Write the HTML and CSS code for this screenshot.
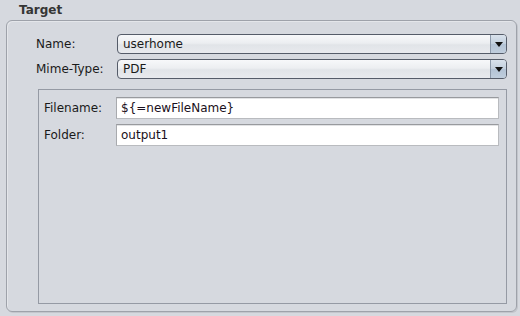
FILE: index.html
```html
<!DOCTYPE html>
<html>
<head>
<meta charset="utf-8">
<link rel="stylesheet" href="styles.css">
</head>
<body>
<div class="title">Target</div>
<div class="panel">
  <div class="rows">
    <label class="lbl">Name:</label>
    <div class="combo"><span class="combo-text">userhome</span><span class="combo-btn"><span class="arrow"></span></span></div>
    <label class="lbl">Mime-Type:</label>
    <div class="combo"><span class="combo-text">PDF</span><span class="combo-btn"><span class="arrow"></span></span></div>
  </div>
  <div class="inner">
    <div class="fields">
      <label class="lbl">Filename:</label>
      <div class="field">${=newFileName}</div>
      <label class="lbl">Folder:</label>
      <div class="field">output1</div>
    </div>
  </div>
</div>
</body>
</html>
```

FILE: styles.css
```css
html, body {
  margin: 0;
  padding: 0;
  width: 520px;
  height: 316px;
  overflow: hidden;
  background: #d6d9df;
  font-family: "DejaVu Sans", sans-serif;
  font-size: 12px;
  color: #1a1a1a;
}
.title {
  font-weight: bold;
  color: #353535;
  padding-left: 19px;
  height: 20px;
  line-height: 20px;
  box-sizing: border-box;
  padding-top: 0;
}
.panel {
  margin-left: 6px;
  width: 511px;
  height: 292px;
  box-sizing: border-box;
  border: 1px solid #9ea2aa;
  border-radius: 6px;
  box-shadow: 1px 1px 0 #c3c6cc, inset 1px 1px 0 #e4e6ea;
  padding: 13px 9px 7px 29px;
  display: flex;
  flex-direction: column;
}
.rows {
  display: grid;
  grid-template-columns: 81px 1fr;
  grid-auto-rows: 20px;
  row-gap: 5px;
  align-items: center;
}
.lbl {
  line-height: 14px;
}
.combo {
  height: 20px;
  box-sizing: border-box;
  border: 1px solid #555c69;
  border-radius: 4px;
  background: linear-gradient(#f7f8fa 0%, #eceef1 45%, #e1e4e8 55%, #e8eaee 100%);
  display: flex;
  align-items: center;
  overflow: hidden;
}
.combo-text {
  flex: 1;
  padding-left: 5px;
  line-height: 18px;
}
.combo-btn {
  width: 15px;
  height: 18px;
  border-left: 1px solid #8c99aa;
  background: linear-gradient(#d9e2ec 0%, #c2cfdd 50%, #b3c3d5 51%, #c0cedd 100%);
  display: flex;
  align-items: center;
  justify-content: center;
}
.arrow {
  width: 0;
  height: 0;
  border-left: 4px solid transparent;
  border-right: 4px solid transparent;
  border-top: 5px solid #111;
}
.inner {
  flex: 1;
  margin-top: 10px;
  margin-left: 2px;
  border: 1px solid #959aa4;
  padding: 7px 7px 7px 5px;
}
.fields {
  display: grid;
  grid-template-columns: 72px 1fr;
  grid-auto-rows: 22px;
  row-gap: 5px;
  align-items: center;
}
.field {
  height: 22px;
  box-sizing: border-box;
  background: #fff;
  border: 1px solid #b9bbbf;
  border-top-color: #989a9e;
  border-left-color: #a8aaae;
  box-shadow: inset 0 1px 0 #e2e3e5;
  padding-left: 4px;
  line-height: 20px;
  color: #1a1020;
}
```
